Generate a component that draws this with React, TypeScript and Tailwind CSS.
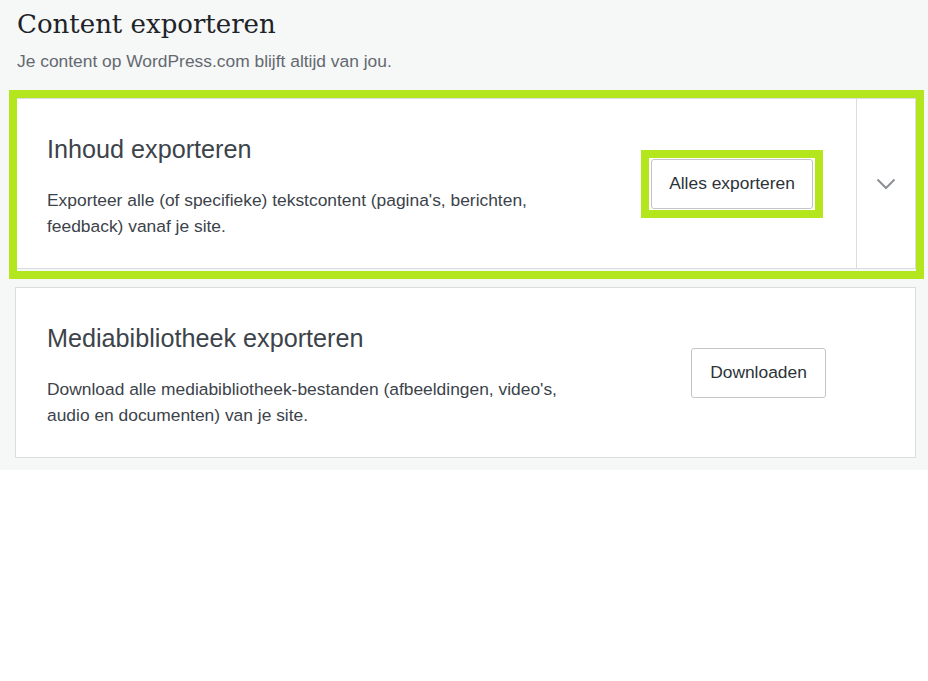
export default function App() {
  const sans = { fontFamily: '"Liberation Sans", Arial, sans-serif' };
  return (
    <div className="min-h-screen bg-white" style={sans}>
      <div className="relative bg-[#f6f7f7] pl-[15px] pr-[12px] pb-[12px]">
        <div className="px-[2px] pt-[6px] pb-[26px]">
          <h1
            className="text-[26px] leading-[36px] text-[#1d2327]"
            style={{ fontFamily: '"DejaVu Serif", "Liberation Serif", serif' }}
          >
            Content exporteren
          </h1>
          <p className="mt-[8px] text-[17.4px] leading-[22px] text-[#646970]">
            Je content op WordPress.com blijft altijd van jou.
          </p>
        </div>

        {/* Card 1 */}
        <div className="flex h-[171px] border border-[#dcdcde] bg-white">
          <div className="flex flex-1 items-center pl-[31px] pr-[33px]">
            <div className="flex-1 self-start pt-[33px]">
              <h2 className="text-[25.2px] leading-[34px] text-[#3c434a]">Inhoud exporteren</h2>
              <p className="mt-[21px] w-[530px] text-[17.4px] leading-[26px] text-[#3c434a]">
                Exporteer alle (of specifieke) tekstcontent (pagina's, berichten, feedback) vanaf je site.
              </p>
            </div>
            <div className="border-8 border-[#b4e61e] bg-white px-[2px] py-[1px]">
              <button className="block h-[50px] w-[162px] rounded-[3px] border border-[#c3c4c7] bg-white text-[17.4px] text-[#2c3338]">
                Alles exporteren
              </button>
            </div>
          </div>
          <div className="flex w-[59px] items-center justify-center border-l border-[#dcdcde]">
            <svg width="20" height="12" viewBox="0 0 20 12" fill="none">
              <path d="M1.5 1.5l8.5 8.5 8.5-8.5" stroke="#8c8f94" strokeWidth="2" />
            </svg>
          </div>
        </div>

        {/* Card 2 */}
        <div className="mt-[18px] flex h-[171px] items-center border border-[#dcdcde] bg-white pl-[31px] pr-[89px]">
          <div className="flex-1 self-start pt-[33px]">
            <h2 className="text-[25.2px] leading-[34px] text-[#3c434a]">Mediabibliotheek exporteren</h2>
            <p className="mt-[21px] w-[530px] text-[17.4px] leading-[26px] text-[#3c434a]">
              Download alle mediabibliotheek-bestanden (afbeeldingen, video's, audio en documenten) van je site.
            </p>
          </div>
          <button className="h-[50px] w-[135px] rounded-[3px] border border-[#c3c4c7] bg-white text-[17.4px] text-[#2c3338]">
            Downloaden
          </button>
        </div>

        {/* Highlight around first card */}
        <div className="pointer-events-none absolute left-[9px] top-[90px] h-[189px] w-[915px] border-8 border-[#b4e61e]" />
      </div>
    </div>
  );
}
